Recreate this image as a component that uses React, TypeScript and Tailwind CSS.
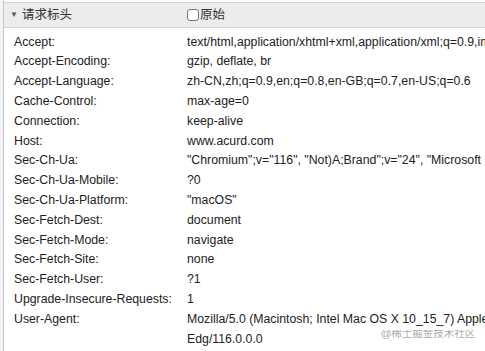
const rows: [string, string][] = [
  ['Accept:', 'text/html,application/xhtml+xml,application/xml;q=0.9,image/avif,image/webp,image/apng,*/*;q=0.8'],
  ['Accept-Encoding:', 'gzip, deflate, br'],
  ['Accept-Language:', 'zh-CN,zh;q=0.9,en;q=0.8,en-GB;q=0.7,en-US;q=0.6'],
  ['Cache-Control:', 'max-age=0'],
  ['Connection:', 'keep-alive'],
  ['Host:', 'www.acurd.com'],
  ['Sec-Ch-Ua:', '"Chromium";v="116", "Not)A;Brand";v="24", "Microsoft Edge";v="116"'],
  ['Sec-Ch-Ua-Mobile:', '?0'],
  ['Sec-Ch-Ua-Platform:', '"macOS"'],
  ['Sec-Fetch-Dest:', 'document'],
  ['Sec-Fetch-Mode:', 'navigate'],
  ['Sec-Fetch-Site:', 'none'],
  ['Sec-Fetch-User:', '?1'],
  ['Upgrade-Insecure-Requests:', '1'],
];

export default function App() {
  return (
    <div className="w-[485px] h-[351px] overflow-hidden bg-white flex text-[12.3px] text-[#222] font-['Liberation_Sans','Noto_Sans_CJK_SC',sans-serif]">
      {/* left strip */}
      <div className="w-[4px] shrink-0 bg-[#f3f3f3] border-r border-[#c8c8c8]" />

      <div className="flex-1 min-w-0 flex flex-col">
        <div className="mt-[2px] h-[26px] shrink-0 bg-[#ececec] border-y border-[#d4d4d4] flex items-center">
          <div className="w-[183px] shrink-0 pl-[6px] flex items-center gap-[4px] text-[#333]">
            <span className="text-[8px] text-[#555]">▼</span>
            <span className="text-[12.5px]">请求标头</span>
          </div>
          <label className="flex items-center gap-[1px] text-[#333]">
            <span className="w-[12px] h-[12px] border border-[#777] rounded-[3px] bg-white" />
            <span className="text-[12.5px]">原始</span>
          </label>
        </div>

        <div className="pt-[4px] flex flex-col">
          {rows.map(([k, v]) => (
            <div key={k} className="flex h-[19.8px] items-center whitespace-nowrap">
              <div className="w-[183px] shrink-0 pl-[10px]">{k}</div>
              <div className="flex-1 min-w-0 overflow-hidden">{v}</div>
            </div>
          ))}
          <div className="flex h-[19.8px] items-center whitespace-nowrap">
            <div className="w-[183px] shrink-0 pl-[10px]">User-Agent:</div>
            <div className="flex-1 min-w-0 overflow-hidden">
              Mozilla/5.0 (Macintosh; Intel Mac OS X 10_15_7) AppleWebKit/537.36 (KHTML, like Gecko)
            </div>
          </div>
          <div className="flex h-[19.8px] items-center whitespace-nowrap">
            <div className="w-[183px] shrink-0" />
            <div className="flex-1 min-w-0 overflow-hidden flex items-center">
              <span>Edg/116.0.0.0</span>
              <span className="ml-[118px] -mt-[10px] text-[10.5px] text-[#ababab]">@稀土掘金技术社区</span>
            </div>
          </div>
        </div>
      </div>
    </div>
  );
}
